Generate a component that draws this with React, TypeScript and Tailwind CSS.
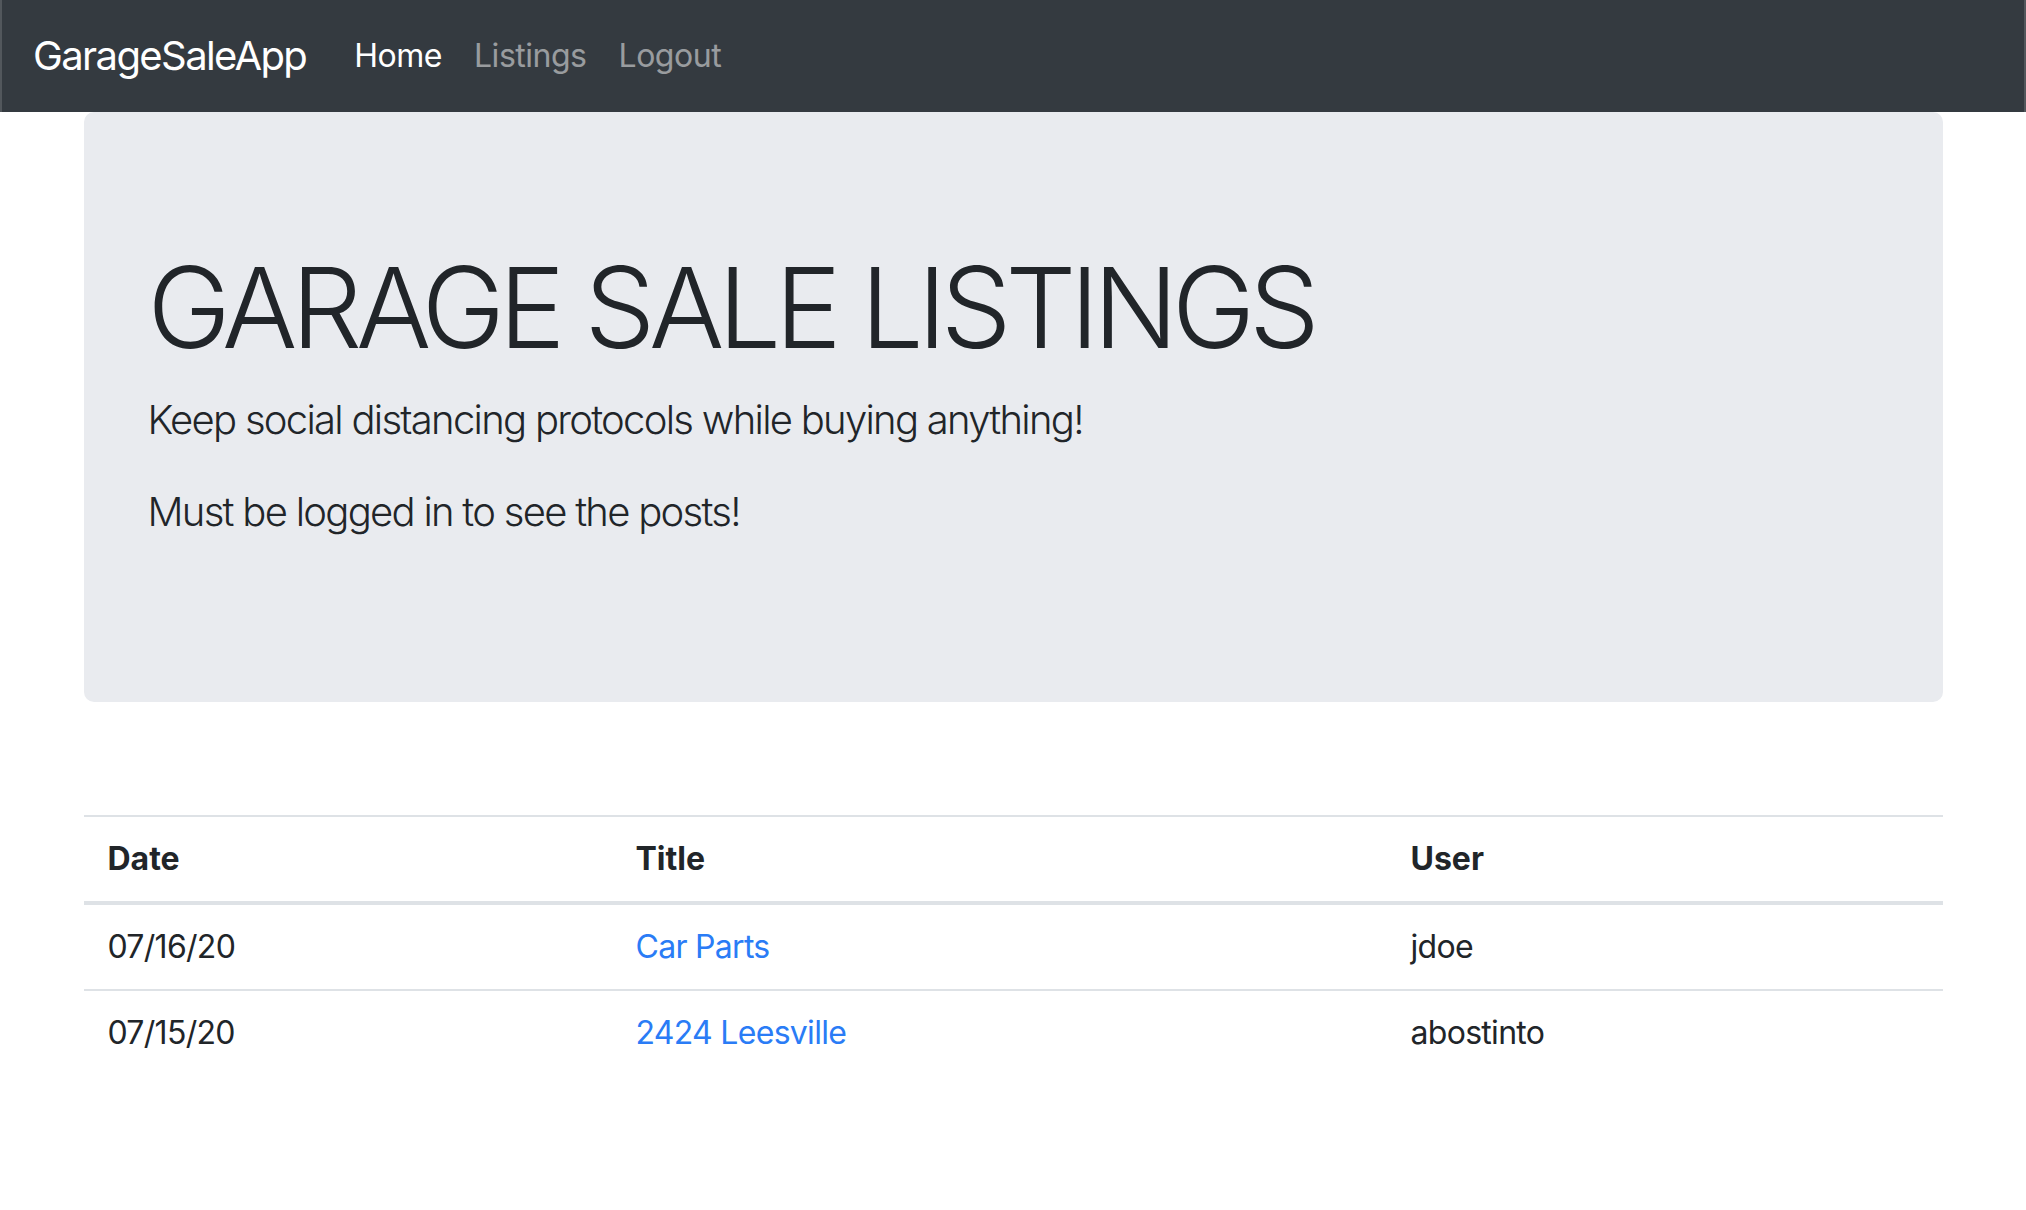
import React from "react";

const rows = [
  { date: "07/16/20", title: "Car Parts", user: "jdoe" },
  { date: "07/15/20", title: "2424 Leesville", user: "abostinto" },
];

export default function App() {
  return (
    <div className="min-h-screen bg-white font-['Inter',sans-serif] text-[#212529]">
      <nav className="flex h-[112px] items-center border-x-2 border-[#52575c] bg-[#343a40] pl-[31px] pr-[30px]">
        <a className="mr-[32px] text-[40px] leading-[60px] tracking-[-0.04em] text-white">GarageSaleApp</a>
        <div className="flex items-center tracking-[-0.03em]">
          <a className="px-[16px] text-[32px] leading-[48px] text-white">Home</a>
          <a className="px-[16px] text-[32px] leading-[48px] text-white/50">Listings</a>
          <a className="px-[16px] text-[32px] leading-[48px] text-white/50">Logout</a>
        </div>
      </nav>

      <div className="mx-auto w-[1859px]">
        <div className="rounded-[10px] bg-[#e9ebef] px-[64px] py-[128px]">
          <h1 className="mb-[16px] text-[112px] font-light leading-[1.2] tracking-[-0.056em]">GARAGE SALE LISTINGS</h1>
          <p className="mb-[32px] text-[40px] font-light leading-[60px] tracking-[-0.043em]">
            Keep social distancing protocols while buying anything!
          </p>
          <p className="mb-[32px] text-[40px] font-light leading-[60px] tracking-[-0.043em]">
            Must be logged in to see the posts!
          </p>
        </div>

        <table className="mt-[113px] w-full border-collapse text-left text-[32px] leading-[48px]">
          <thead>
            <tr>
              <th className="w-[528px] border-t-2 border-b-4 border-[#dee2e6] px-[24px] py-[18px] font-bold">Date</th>
              <th className="w-[775px] border-t-2 border-b-4 border-[#dee2e6] px-[24px] py-[18px] font-bold">Title</th>
              <th className="border-t-2 border-b-4 border-[#dee2e6] px-[24px] py-[18px] font-bold">User</th>
            </tr>
          </thead>
          <tbody className="tracking-[-0.022em]">
            {rows.map((r, i) => (
              <tr key={r.date}>
                <td className={`${i === 0 ? "" : "border-t-2"} border-[#dee2e6] px-[24px] py-[18px]`}>{r.date}</td>
                <td className={`${i === 0 ? "" : "border-t-2"} border-[#dee2e6] px-[24px] py-[18px]`}>
                  <a className="text-[#2a7cf6]">{r.title}</a>
                </td>
                <td className={`${i === 0 ? "" : "border-t-2"} border-[#dee2e6] px-[24px] py-[18px]`}>{r.user}</td>
              </tr>
            ))}
          </tbody>
        </table>
      </div>
    </div>
  );
}
